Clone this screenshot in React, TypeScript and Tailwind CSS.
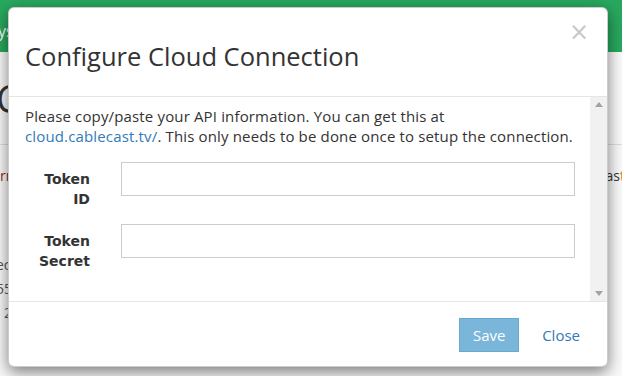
import React from "react";

export default function App() {
  const sans = { fontFamily: '"Open Sans", "Noto Sans", sans-serif' };
  return (
    <div
      className="relative w-[622px] h-[376px] overflow-hidden bg-[#f9f9f9] text-[#333]"
      style={sans}
    >
      {/* Background page */}
      <div className="flex flex-col">
        <div className="h-[52px] bg-[#28a85e] flex items-center pl-0 pt-[10px]">
          <span className="text-white text-[16px] -ml-[2px]">ystems</span>
        </div>
        <div className="h-[93px] border-b border-[#dddddd] flex items-center">
          <span className="text-[38px] text-[#333] -ml-[4px] leading-none">Cloud</span>
        </div>
        <div className="flex justify-between items-center h-[40px] pt-[20px]">
          <span className="text-[14px] text-[#8a2a2a]">rname</span>
          <span className="text-[14px] text-[#333] -mr-[3px]">
            Cablecas<span className="text-[#e07a1f]">t</span>
          </span>
        </div>
        <div className="flex flex-col pt-[68px] text-[14px] text-[#555] leading-[24px] -ml-[4px]">
          <span>ecord</span>
          <span>55</span>
          <span className="pl-[8px]">2</span>
        </div>
      </div>

      {/* Modal */}
      <div className="absolute left-[8px] top-[7px] w-[600px] h-[360px] bg-white rounded-[6px] border border-[rgba(0,0,0,0.2)] shadow-[0_5px_15px_rgba(0,0,0,0.5)] flex flex-col overflow-hidden">
        <div className="relative h-[89px] shrink-0 border-b border-[#e5e5e5] flex items-center pl-[16px] pt-[8px]">
          <h4 className="text-[25.5px] text-[#333] font-normal leading-[1.1]">
            Configure Cloud Connection
          </h4>
          <span
            className="absolute right-[18px] top-[12px] text-[24px] leading-none text-[#c8c8c8]"
            style={{ fontFamily: '"DejaVu Sans", sans-serif', fontWeight: 400 }}
          >
            ×
          </span>
        </div>

        <div className="flex h-[204px] shrink-0">
          <div className="flex-1 pl-[16px] pr-[15px] pt-[9px]">
            <p className="text-[15px] tracking-[0.15px] leading-[20px] text-[#333] mb-[16px] whitespace-nowrap">
              Please copy/paste your API information. You can get this at
              <br />
              <a className="text-[#337ab7]">cloud.cablecast.tv/</a>. This only needs to be done once to setup the connection.
            </p>
            <div className="flex mb-[15px]">
              <label
                className="w-[65px] shrink-0 text-right text-[14px] font-bold leading-[20px] pt-[7px] text-[#333]"
                style={{ fontFamily: '"DejaVu Sans", Verdana, sans-serif' }}
              >
                Token
                <br />
                ID
              </label>
              <div className="ml-[31px] flex-1">
                <input className="w-full h-[34px] border border-[#cccccc] bg-white outline-none" />
              </div>
            </div>
            <div className="flex">
              <label
                className="w-[65px] shrink-0 text-right text-[14px] font-bold leading-[20px] pt-[7px] text-[#333]"
                style={{ fontFamily: '"DejaVu Sans", Verdana, sans-serif' }}
              >
                Token
                <br />
                Secret
              </label>
              <div className="ml-[31px] flex-1">
                <input className="w-full h-[34px] border border-[#cccccc] bg-white outline-none" />
              </div>
            </div>
          </div>
          <div className="w-[17px] shrink-0 bg-[#f1f1f1] flex flex-col justify-between items-center py-[5px]">
            <svg width="8" height="5" viewBox="0 0 8 5"><path d="M4 0 L8 5 L0 5 Z" fill="#a3a3a3" /></svg>
            <svg width="8" height="5" viewBox="0 0 8 5"><path d="M0 0 L8 0 L4 5 Z" fill="#a3a3a3" /></svg>
          </div>
        </div>

        <div className="flex-1 border-t border-[#e5e5e5] flex items-center justify-end pr-[15px] pt-[2px]">
          <button className="w-[60px] h-[34px] bg-[#79b6da] border border-[#6aa8d0] text-white text-[15px]">
            Save
          </button>
          <a className="ml-[11px] px-[12px] text-[15px] text-[#337ab7]">Close</a>
        </div>
      </div>
    </div>
  );
}
